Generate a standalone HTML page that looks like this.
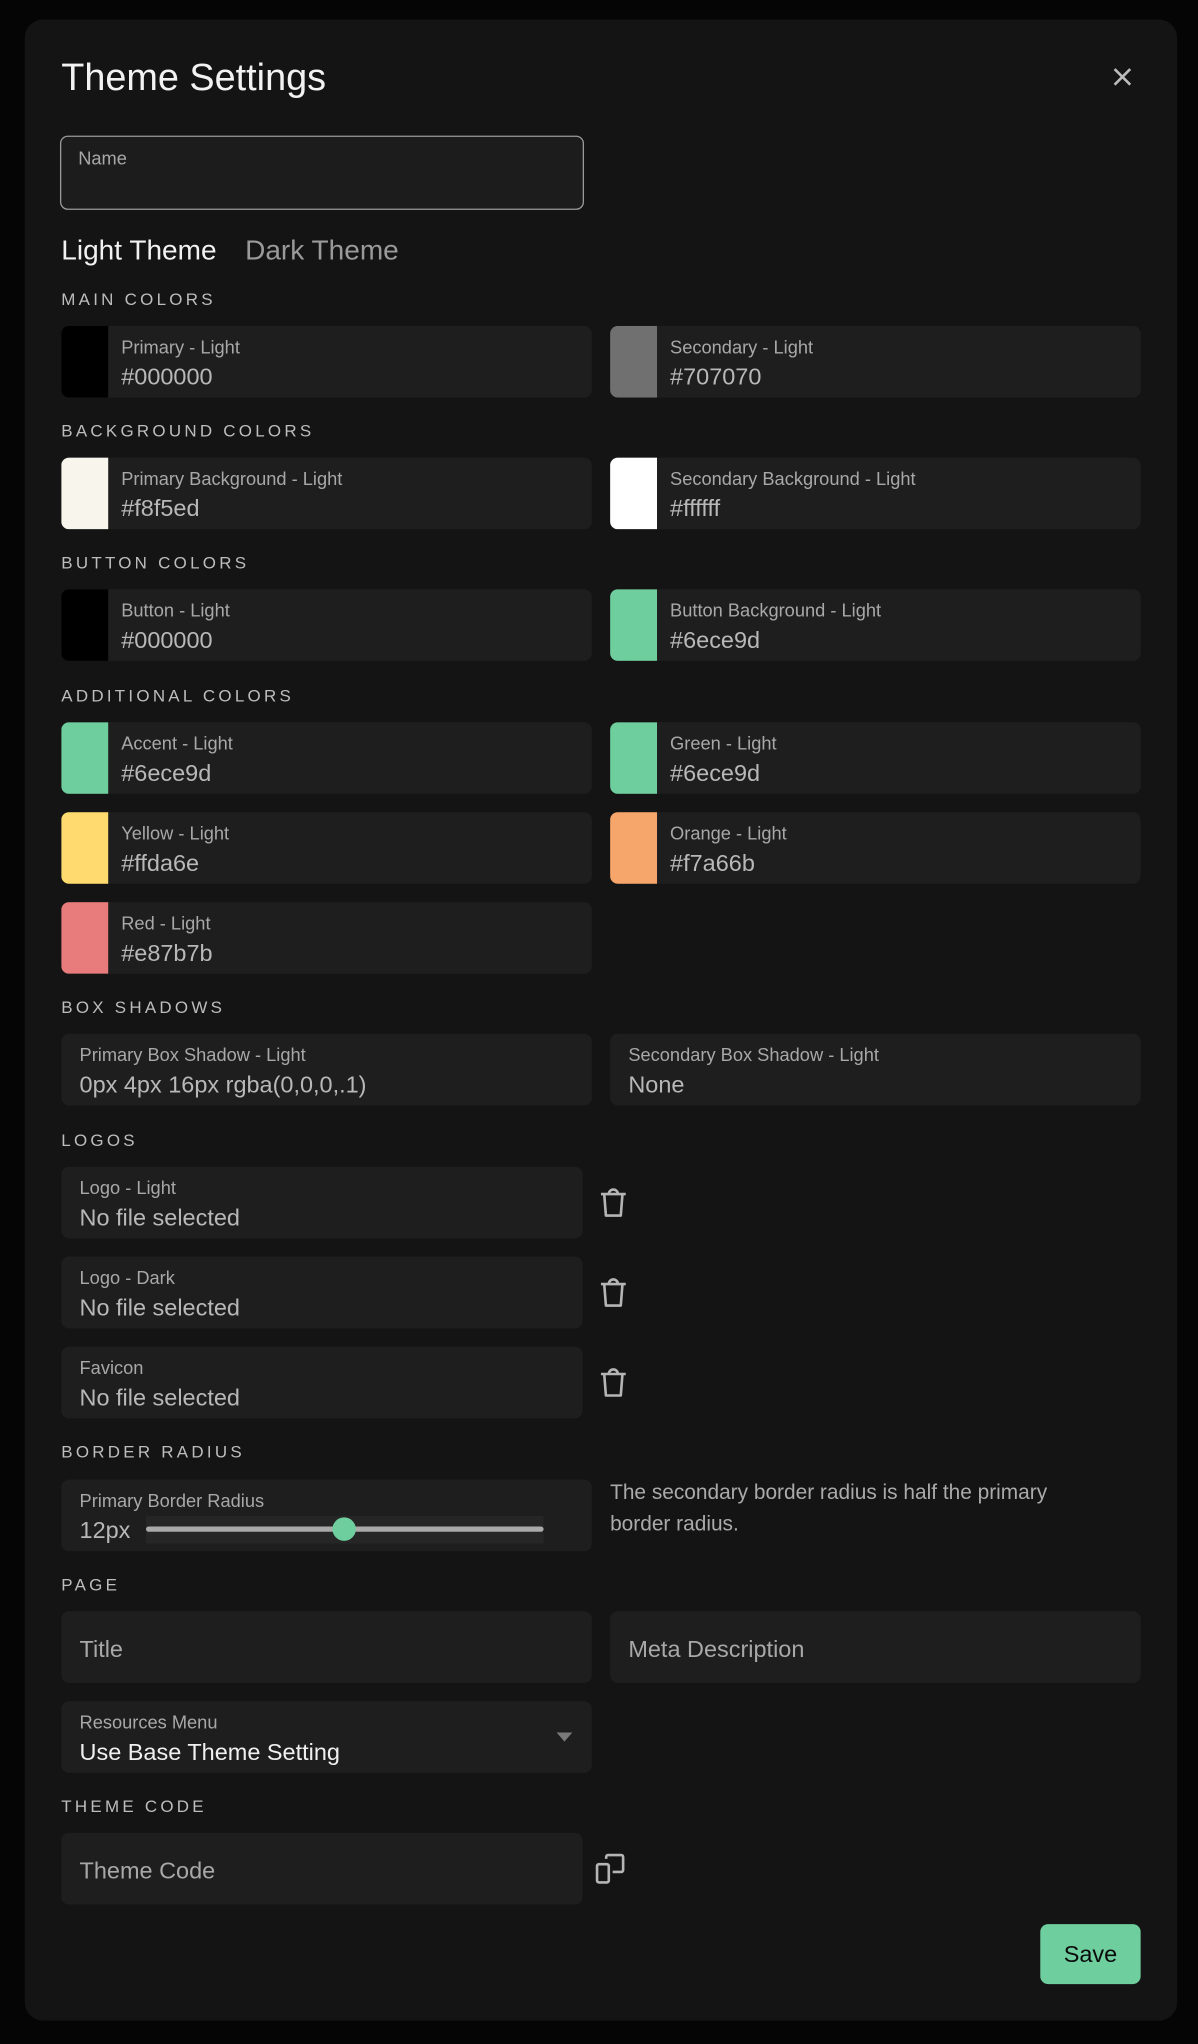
<!DOCTYPE html>
<html><head><meta charset="utf-8"><style>
html,body{margin:0;padding:0;width:1198px;height:2044px;overflow:hidden;background:#050505;}
#s{position:absolute;left:0;top:0;width:919px;height:1568px;transform:scale(1.3036);transform-origin:0 0;font-family:"Liberation Sans",sans-serif;}
.modal{position:absolute;left:19px;top:15px;width:884px;height:1535px;background:#141414;border-radius:14px;}
.a{position:absolute;}
.t{left:47px;top:44px;font-size:29px;color:#f2f2f2;}
.sec{position:absolute;left:47px;font-size:13px;letter-spacing:2.5px;color:#bdbdbd;}
.f{position:absolute;background:#1e1e1e;border-radius:6px;overflow:hidden;height:55px;}
.sw{position:absolute;left:0;top:0;width:36px;height:100%;}
.lb{position:absolute;font-size:14px;color:#a8a8a8;top:8px;white-space:nowrap;}
.v{position:absolute;font-size:18px;color:#b8b8b8;top:29px;white-space:nowrap;}
.L{left:47px;width:407px}.R{left:468px;width:407px}
</style></head><body><div id="s">
<div class="modal"></div>
<div class="a t">Theme Settings</div>
<svg class="a" style="left:853px;top:51px" width="16" height="16" viewBox="0 0 16 16"><path d="M2 2L14 14M14 2L2 14" stroke="#bbb" stroke-width="2"/></svg>
<div class="a" style="left:46px;top:104px;width:400px;height:55px;border:1px solid #9a9a9a;border-radius:6px;background:#1c1c1c"></div>
<div class="a" style="left:60px;top:113px;font-size:14px;color:#a8a8a8">Name</div>
<div class="a" style="left:47px;top:180px;font-size:21.5px;color:#f2f2f2">Light Theme</div>
<div class="a" style="left:188px;top:180px;font-size:21.5px;color:#9a9a9a">Dark Theme</div>

<div class="sec" style="top:222px">MAIN COLORS</div>
<div class="f L" style="top:250px"><div class="sw" style="background:#000"></div><div class="lb" style="left:46px">Primary - Light</div><div class="v" style="left:46px">#000000</div></div>
<div class="f R" style="top:250px"><div class="sw" style="background:#707070"></div><div class="lb" style="left:46px">Secondary - Light</div><div class="v" style="left:46px">#707070</div></div>

<div class="sec" style="top:323px">BACKGROUND COLORS</div>
<div class="f L" style="top:351px"><div class="sw" style="background:#f8f5ed"></div><div class="lb" style="left:46px">Primary Background - Light</div><div class="v" style="left:46px">#f8f5ed</div></div>
<div class="f R" style="top:351px"><div class="sw" style="background:#fff"></div><div class="lb" style="left:46px">Secondary Background - Light</div><div class="v" style="left:46px">#ffffff</div></div>

<div class="sec" style="top:424px">BUTTON COLORS</div>
<div class="f L" style="top:452px"><div class="sw" style="background:#000"></div><div class="lb" style="left:46px">Button - Light</div><div class="v" style="left:46px">#000000</div></div>
<div class="f R" style="top:452px"><div class="sw" style="background:#6ece9d"></div><div class="lb" style="left:46px">Button Background - Light</div><div class="v" style="left:46px">#6ece9d</div></div>

<div class="sec" style="top:526px">ADDITIONAL COLORS</div>
<div class="f L" style="top:554px"><div class="sw" style="background:#6ece9d"></div><div class="lb" style="left:46px">Accent - Light</div><div class="v" style="left:46px">#6ece9d</div></div>
<div class="f R" style="top:554px"><div class="sw" style="background:#6ece9d"></div><div class="lb" style="left:46px">Green - Light</div><div class="v" style="left:46px">#6ece9d</div></div>
<div class="f L" style="top:623px"><div class="sw" style="background:#ffda6e"></div><div class="lb" style="left:46px">Yellow - Light</div><div class="v" style="left:46px">#ffda6e</div></div>
<div class="f R" style="top:623px"><div class="sw" style="background:#f7a66b"></div><div class="lb" style="left:46px">Orange - Light</div><div class="v" style="left:46px">#f7a66b</div></div>
<div class="f L" style="top:692px"><div class="sw" style="background:#e87b7b"></div><div class="lb" style="left:46px">Red - Light</div><div class="v" style="left:46px">#e87b7b</div></div>

<div class="sec" style="top:765px">BOX SHADOWS</div>
<div class="f L" style="top:793px"><div class="lb" style="left:14px">Primary Box Shadow - Light</div><div class="v" style="left:14px">0px 4px 16px rgba(0,0,0,.1)</div></div>
<div class="f R" style="top:793px"><div class="lb" style="left:14px">Secondary Box Shadow - Light</div><div class="v" style="left:14px">None</div></div>

<div class="sec" style="top:867px">LOGOS</div>
<div class="f" style="left:47px;width:400px;top:895px"><div class="lb" style="left:14px">Logo - Light</div><div class="v" style="left:14px">No file selected</div></div>
<div class="f" style="left:47px;width:400px;top:964px"><div class="lb" style="left:14px">Logo - Dark</div><div class="v" style="left:14px">No file selected</div></div>
<div class="f" style="left:47px;width:400px;top:1033px"><div class="lb" style="left:14px">Favicon</div><div class="v" style="left:14px">No file selected</div></div>
<svg class="a" style="left:459px;top:910px" width="23" height="26" viewBox="0 0 23 26"><path d="M2 6H21M8 6A3.5 3.5 0 0 1 15 6M4.5 6L5.8 22.5H17.2L18.5 6" fill="none" stroke="#b5b5b5" stroke-width="2" stroke-linejoin="round"/></svg>
<svg class="a" style="left:459px;top:979px" width="23" height="26" viewBox="0 0 23 26"><path d="M2 6H21M8 6A3.5 3.5 0 0 1 15 6M4.5 6L5.8 22.5H17.2L18.5 6" fill="none" stroke="#b5b5b5" stroke-width="2" stroke-linejoin="round"/></svg>
<svg class="a" style="left:459px;top:1048px" width="23" height="26" viewBox="0 0 23 26"><path d="M2 6H21M8 6A3.5 3.5 0 0 1 15 6M4.5 6L5.8 22.5H17.2L18.5 6" fill="none" stroke="#b5b5b5" stroke-width="2" stroke-linejoin="round"/></svg>

<div class="sec" style="top:1106px">BORDER RADIUS</div>
<div class="f L" style="top:1135px"><div class="lb" style="left:14px">Primary Border Radius</div><div class="v" style="left:14px">12px</div>
<div class="a" style="left:65px;top:28px;width:305px;height:21px;background:#262626"></div>
<div class="a" style="left:65px;top:36px;width:305px;height:4px;background:#aaa;border-radius:2px"></div>
<div class="a" style="left:208px;top:29px;width:18px;height:18px;background:#6ece9d;border-radius:50%"></div></div>
<div class="a" style="left:468px;top:1134px;font-size:16px;line-height:24px;color:#aaa;width:365px">The secondary border radius is half the primary border radius.</div>

<div class="sec" style="top:1208px">PAGE</div>
<div class="f L" style="top:1236px"><div class="v" style="left:14px;top:19px;color:#a8a8a8">Title</div></div>
<div class="f R" style="top:1236px"><div class="v" style="left:14px;top:19px;color:#a8a8a8">Meta Description</div></div>
<div class="f L" style="top:1305px"><div class="lb" style="left:14px">Resources Menu</div><div class="v" style="left:14px;color:#f0f0f0">Use Base Theme Setting</div>
<svg class="a" style="left:379px;top:23px" width="14" height="9" viewBox="0 0 14 9"><path d="M1 1H13L7 8Z" fill="#7a7a7a"/></svg></div>

<div class="sec" style="top:1378px">THEME CODE</div>
<div class="f" style="left:47px;width:400px;top:1406px"><div class="v" style="left:14px;top:19px;color:#a8a8a8">Theme Code</div></div>
<svg class="a" style="left:456px;top:1421px" width="24" height="25" viewBox="0 0 24 25"><path d="M2 10.5A1.5 1.5 0 0 1 3.5 9H9.5A1.5 1.5 0 0 1 11 10.5V21.5A1.5 1.5 0 0 1 9.5 23H3.5A1.5 1.5 0 0 1 2 21.5ZM9 5V3.5A1.5 1.5 0 0 1 10.5 2H20.5A1.5 1.5 0 0 1 22 3.5V13.5A1.5 1.5 0 0 1 20.5 15H14" fill="none" stroke="#b5b5b5" stroke-width="2"/></svg>

<div class="a" style="left:798px;top:1476px;width:77px;height:46px;background:#6ece9d;border-radius:6px;font-size:18px;color:#0a0a0a;text-align:center;line-height:46px">Save</div>
</div></body></html>
